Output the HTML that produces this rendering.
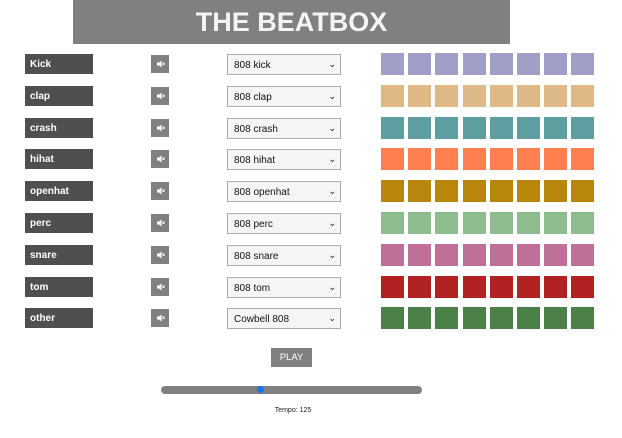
<!DOCTYPE html>
<html><head><style>
body{margin:0;width:622px;height:438px;background:#fff;font-family:"Liberation Sans",Arial,sans-serif;position:relative;overflow:hidden}
.t{position:absolute;left:73px;top:0;width:437px;height:44px;background:#808080;color:#f4f4f4;font-weight:bold;font-size:27px;text-align:center;line-height:44px}
.lab{position:absolute;left:25px;width:68px;height:20px;background:#4f4f4f;color:#fff;font-weight:bold;font-size:10px;line-height:22px;padding-left:5px;box-sizing:border-box}
.mu{position:absolute;left:151px;width:18px;height:18px;background:#808080}
.sel{position:absolute;left:227px;width:114px;height:21px;border:1px solid #aaa;box-sizing:border-box;background:#f5f5f5;font-size:10px;line-height:21px;padding-left:6px;color:#111}
.sel:after{content:"⌄";position:absolute;right:4px;top:-1px;font-size:9px}
.sq{position:absolute;width:23px;height:22px}
.play{position:absolute;left:271px;top:348px;width:41px;height:19px;background:#808080;color:#fff;font-size:9.5px;text-align:center;line-height:19px}
.sl{position:absolute;left:161px;top:386px;width:261px;height:8px;border-radius:4px;background:#808080}
.th{position:absolute;left:257px;top:386px;width:7px;height:7px;border-radius:50%;background:#1a73e8}
.tm{position:absolute;left:0;width:586px;top:407px;text-align:center;font-size:7px;color:#222}
</style></head><body>
<div class="t">THE BEATBOX</div>
<div id="r"></div>
<div class="play">PLAY</div>
<div class="sl"></div><div class="th"></div>
<div class="tm">Tempo: 125</div>
<script>
var rows=[["Kick","808 kick","#9f9fc8"],["clap","808 clap","#deb887"],["crash","808 crash","#5f9ea0"],["hihat","808 hihat","#ff7f50"],["openhat","808 openhat","#b8860b"],["perc","808 perc","#8fbc8f"],["snare","808 snare","#bf7099"],["tom","808 tom","#b22222"],["other","Cowbell 808","#4b8049"]];
var h="";
rows.forEach(function(r,i){var c=Math.round(64+i*31.8);
h+='<div class="lab" style="top:'+(c-10)+'px">'+r[0]+'</div>';
h+='<div class="mu" style="top:'+(c-9)+'px"><svg width="18" height="18"><path d="M6 7.5h2l2.5-2v7l-2.5-2h-2z" fill="#fff"/><path d="M11.5 7.5l2 2.5M13.5 7.5l-2 2.5" stroke="#fff" stroke-width="1"/></svg></div>';
h+='<div class="sel" style="top:'+(c-10)+'px">'+r[1]+'</div>';
for(var j=0;j<8;j++)h+='<div class="sq" style="top:'+(c-11)+'px;left:'+(381+j*27.2)+'px;background:'+r[2]+'"></div>';
});
document.getElementById("r").innerHTML=h;
</script>
</body></html>
